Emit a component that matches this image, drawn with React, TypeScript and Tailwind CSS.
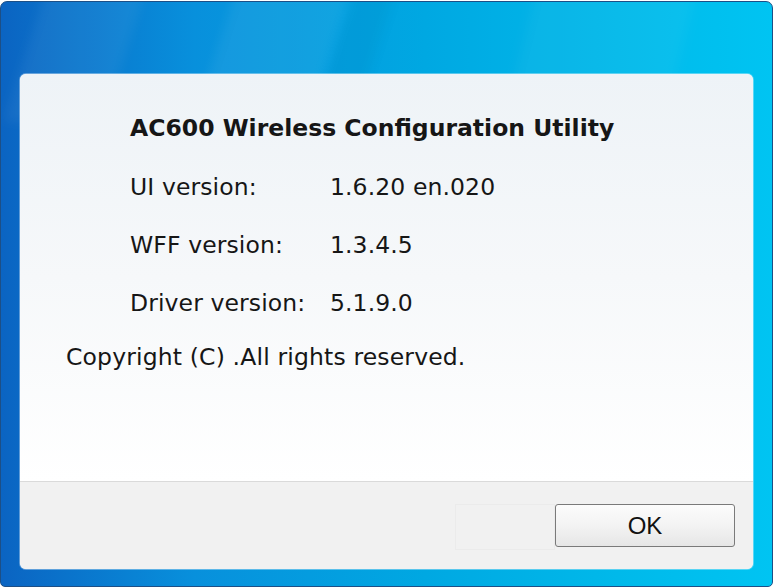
import React from "react";

const rows = [
  { label: "UI version:", value: "1.6.20 en.020" },
  { label: "WFF version:", value: "1.3.4.5" },
  { label: "Driver version:", value: "5.1.9.0" },
];

export default function App() {
  return (
    <div className="w-[773px] h-[587px] bg-white overflow-hidden">
      {/* window frame */}
      <div className="relative h-[586px] mt-[1px] rounded-t-[7px] rounded-b-[5px] border border-[#1d4f86] bg-[linear-gradient(90deg,#0b64c2_0%,#0890dc_25%,#00a8e2_55%,#00b9ea_80%,#00c4f2_100%)] overflow-hidden pt-[72px] px-[19px] pb-[17px]">
        {/* glass streaks across the caption */}
        <div className="pointer-events-none absolute left-0 top-0 w-full h-[110px] blur-[6px]">
          <div className="absolute top-[-20px] left-[25px] w-[100px] h-[140px] skew-x-[-18deg] bg-white/[0.05]" />
          <div className="absolute top-[-20px] left-[215px] w-[115px] h-[140px] skew-x-[-18deg] bg-white/[0.06]" />
          <div className="absolute top-[-20px] left-[335px] w-[40px] h-[140px] skew-x-[-18deg] bg-black/[0.03]" />
          <div className="absolute top-[-20px] left-[520px] w-[160px] h-[140px] skew-x-[-14deg] bg-white/[0.04]" />
        </div>

        {/* client panel */}
        <div className="relative h-full flex flex-col rounded-[6px] overflow-hidden bg-white shadow-[0_0_0_1px_rgba(255,255,255,0.35)]">
          <div
            className="flex-1 flex flex-col bg-[linear-gradient(180deg,#eef3f7_0%,#f6f8fa_50%,#ffffff_100%)] text-[#161616]"
            style={{ fontFamily: '"DejaVu Sans", Verdana, sans-serif' }}
          >
            <div className="pt-[40px] pl-[110px] text-[23.5px] leading-[28px] font-bold">
              AC600 Wireless Configuration Utility
            </div>
            <div className="flex flex-col gap-[30px] mt-[31px] pl-[110px] text-[23.5px] leading-[28px] tracking-[0.1px]">
              {rows.map((r) => (
                <div key={r.label} className="flex">
                  <span className="w-[200px]">{r.label}</span>
                  <span>{r.value}</span>
                </div>
              ))}
            </div>
            <div className="mt-[26px] pl-[46px] text-[23.5px] leading-[28px] tracking-[0.15px]">
              Copyright (C) .All rights reserved.
            </div>
          </div>

          {/* button bar */}
          <div className="h-[88px] border-t border-[#dadada] bg-[#f1f1f1] flex items-start justify-end pt-[22px] pr-[18px]">
            <div className="w-[100px] h-[46px] border border-[#ebebeb]" />
            <button
              className="w-[180px] h-[43px] rounded-[3px] border border-[#7a7a7a] bg-[linear-gradient(180deg,#fcfcfc_0%,#f3f3f3_50%,#e6e6e6_100%)] text-[24px] text-[#111] flex items-center justify-center"
              style={{ fontFamily: '"Liberation Sans", Arial, sans-serif' }}
            >
              OK
            </button>
          </div>
        </div>
      </div>
    </div>
  );
}
